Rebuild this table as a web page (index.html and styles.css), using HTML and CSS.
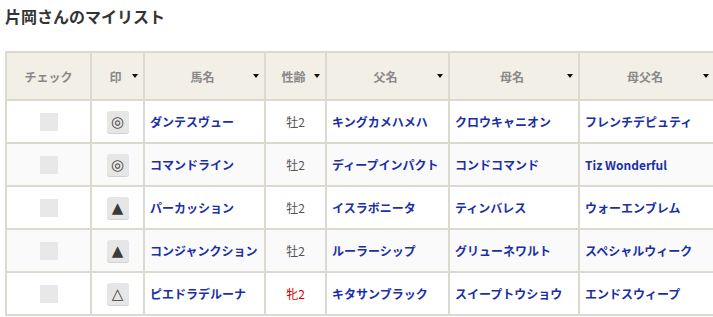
FILE: index.html
```html
<!DOCTYPE html>
<html lang="ja">
<head>
<meta charset="utf-8">
<link rel="stylesheet" href="styles.css">
</head>
<body>
<div class="page">
  <h2 class="title">片岡さんのマイリスト</h2>
  <table class="list">
    <colgroup>
      <col class="c-check"><col class="c-mark"><col class="c-name"><col class="c-age"><col class="c-sire"><col class="c-dam"><col class="c-bms">
    </colgroup>
    <thead>
      <tr>
        <th>チェック</th>
        <th class="sort">印<span class="arrow"></span></th>
        <th class="sort">馬名<span class="arrow"></span></th>
        <th class="sort">性齢<span class="arrow"></span></th>
        <th class="sort">父名<span class="arrow"></span></th>
        <th class="sort">母名<span class="arrow"></span></th>
        <th class="sort">母父名<span class="arrow"></span></th>
      </tr>
    </thead>
    <tbody>
      <tr>
        <td class="center"><span class="check"></span></td>
        <td class="center"><span class="mark">◎</span></td>
        <td><a class="link">ダンテスヴュー</a></td>
        <td class="center age">牡2</td>
        <td><a class="link">キングカメハメハ</a></td>
        <td><a class="link">クロウキャニオン</a></td>
        <td><a class="link">フレンチデピュティ</a></td>
      </tr>
      <tr class="alt">
        <td class="center"><span class="check"></span></td>
        <td class="center"><span class="mark">◎</span></td>
        <td><a class="link">コマンドライン</a></td>
        <td class="center age">牡2</td>
        <td><a class="link">ディープインパクト</a></td>
        <td><a class="link">コンドコマンド</a></td>
        <td><a class="link">Tiz Wonderful</a></td>
      </tr>
      <tr>
        <td class="center"><span class="check"></span></td>
        <td class="center"><span class="mark tri">▲</span></td>
        <td><a class="link">パーカッション</a></td>
        <td class="center age">牡2</td>
        <td><a class="link">イスラボニータ</a></td>
        <td><a class="link">ティンバレス</a></td>
        <td><a class="link">ウォーエンブレム</a></td>
      </tr>
      <tr class="alt">
        <td class="center"><span class="check"></span></td>
        <td class="center"><span class="mark tri">▲</span></td>
        <td><a class="link">コンジャンクション</a></td>
        <td class="center age">牡2</td>
        <td><a class="link">ルーラーシップ</a></td>
        <td><a class="link">グリューネワルト</a></td>
        <td><a class="link">スペシャルウィーク</a></td>
      </tr>
      <tr>
        <td class="center"><span class="check"></span></td>
        <td class="center"><span class="mark tri">△</span></td>
        <td><a class="link">ピエドラデルーナ</a></td>
        <td class="center age female">牝2</td>
        <td><a class="link">キタサンブラック</a></td>
        <td><a class="link">スイープトウショウ</a></td>
        <td><a class="link">エンドスウィープ</a></td>
      </tr>
    </tbody>
  </table>
</div>
</body>
</html>
```
FILE: styles.css
```css
html, body {
  margin: 0;
  padding: 0;
  background: #fff;
}
body {
  font-family: "Noto Sans CJK JP", "Noto Sans", sans-serif;
  color: #333;
}
.page {
  padding: 4px 0 0 5px;
}
.title {
  margin: 0;
  font-size: 16px;
  line-height: 24px;
  font-weight: bold;
  color: #333;
  height: 47px;
}
.list {
  border-collapse: collapse;
  table-layout: fixed;
  width: 709px;
}
.c-check { width: 85px; }
.c-mark { width: 53px; }
.c-name { width: 121px; }
.c-age { width: 61px; }
.c-sire { width: 123px; }
.c-dam { width: 130px; }
.c-bms { width: 136px; }
.list th, .list td {
  border: 2px solid #dcd9ce;
}
.list th {
  background: #f2efe7;
  color: #888;
  font-size: 12px;
  font-weight: bold;
  height: 46px;
  padding: 0;
  text-align: center;
  position: relative;
}
.list th.sort {
  padding-right: 4px;
}
.arrow {
  position: absolute;
  right: 5px;
  top: 50%;
  margin-top: -2px;
  width: 0;
  height: 0;
  border-left: 3.5px solid transparent;
  border-right: 3.5px solid transparent;
  border-top: 4px solid #111;
}
.list td {
  height: 41px;
  padding: 0 5px;
  font-size: 12px;
  vertical-align: middle;
  white-space: nowrap;
}
.list tr.alt td {
  background: #fafafa;
}
.center {
  text-align: center;
}
.check {
  display: inline-block;
  width: 18px;
  height: 18px;
  background: #e8e8e8;
  vertical-align: middle;
}
.mark {
  display: inline-block;
  width: 22px;
  height: 22px;
  line-height: 22px;
  border-radius: 3px;
  background: #e6e6e6;
  box-shadow: 0 1px 0 #d2d2d2;
  font-size: 15px;
  color: #444;
  text-align: center;
  vertical-align: middle;
  font-family: "DejaVu Sans", sans-serif;
}
.mark.tri {
  font-size: 15px;
  color: #3a3a3a;
}
.link {
  color: #1a2fa6;
  font-weight: bold;
  text-decoration: none;
}
.age {
  color: #555;
  font-size: 13px;
}
.age.female {
  color: #d40000;
}
```
